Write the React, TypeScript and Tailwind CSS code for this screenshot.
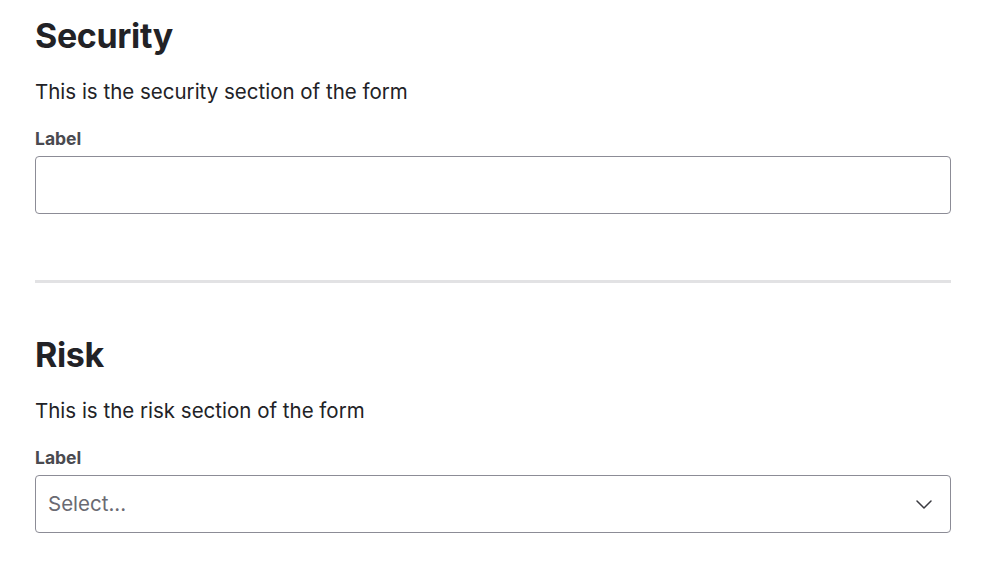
import React from 'react'

function Chevron() {
  return (
    <svg width="16" height="9" viewBox="0 0 16 9" fill="none" className="text-[#3a3a40]">
      <path d="M1 1L8 8L15 1" stroke="currentColor" strokeWidth="1.5" strokeLinecap="round" strokeLinejoin="round" />
    </svg>
  )
}

export default function App() {
  return (
    <div className="min-h-screen bg-white text-[#222226]" style={{ fontFamily: 'Inter, "Liberation Sans", sans-serif' }}>
      <div className="w-[916px] ml-[35px] pt-[13px]">
        {/* Security */}
        <section>
          <h1 className="text-[34px] leading-[46px] font-bold tracking-[-0.01em]">Security</h1>
          <p className="mt-[19px] text-[20.5px] leading-[28px]">This is the security section of the form</p>
          <label className="block mt-[22px] text-[17.5px] leading-[22px] font-bold text-[#4a4a50]">Label</label>
          <input
            type="text"
            className="block mt-[6px] w-full h-[58px] rounded-[4px] border border-[#8c8c96] px-3 text-[20px] outline-none"
          />
        </section>

        <div className="mt-[66px] h-[3px] bg-[#e2e2e4]" />

        {/* Risk */}
        <section className="mt-[49px]">
          <h2 className="text-[34px] leading-[46px] font-bold tracking-[-0.01em]">Risk</h2>
          <p className="mt-[19px] text-[20.5px] leading-[28px]">This is the risk section of the form</p>
          <label className="block mt-[22px] text-[17.5px] leading-[22px] font-bold text-[#4a4a50]">Label</label>
          <button
            type="button"
            className="mt-[6px] w-full h-[58px] rounded-[4px] border border-[#8c8c96] pl-[12px] pr-[18px] flex items-center justify-between text-left"
          >
            <span className="text-[20.5px] text-[#6a6a72]">Select...</span>
            <Chevron />
          </button>
        </section>
      </div>
    </div>
  )
}
